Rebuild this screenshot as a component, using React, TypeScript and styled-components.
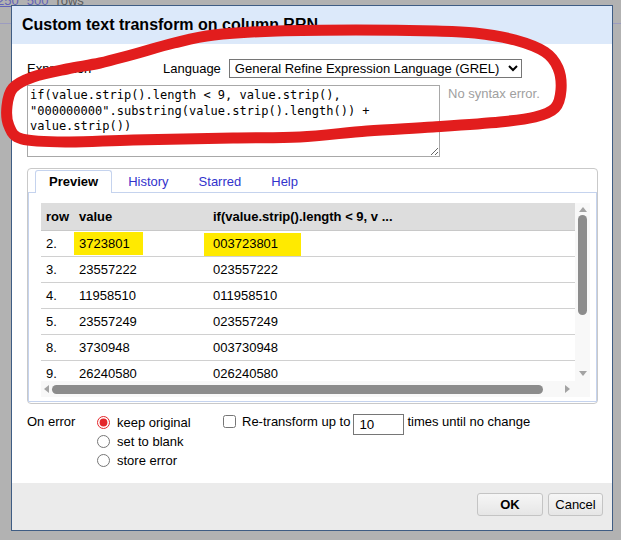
import React from 'react';
import styled, { createGlobalStyle } from 'styled-components';

const GlobalStyle = createGlobalStyle`
  html, body { margin: 0; padding: 0; background: #b2b2b2; }
  body { font-family: "Liberation Sans", Arial, sans-serif; font-size: 13px; color: #000; }
  * { box-sizing: border-box; }
`;

const Page = styled.div`
  position: relative;
  width: 621px;
  height: 540px;
  overflow: hidden;
  background: #b2b2b2;
`;

const BackgroundPage = styled.div`
  display: flex;
  flex-direction: column;
`;

const PagerRow = styled.div`
  display: flex;
  gap: 8px;
  margin: -7px 0 0 -3px;
  height: 16px;
  line-height: 15px;
`;

const PagerLink = styled.span`
  color: #6262b8;
  text-decoration: underline;
`;

const PagerText = styled.span`
  color: #5c5c5c;
`;

const PageRule = styled.div`
  margin-top: 14px;
  height: 1px;
  background: #9c9cc0;
`;

const Dialog = styled.div`
  position: absolute;
  left: 11px;
  top: 5px;
  width: 602px;
  height: 526px;
  border: 1px solid #3f5d84;
  background: #fff;
  display: flex;
  flex-direction: column;
`;

const TitleBar = styled.div`
  height: 38px;
  background: #dce9fa;
  padding: 0 10px;
  display: flex;
  align-items: center;
  font-weight: bold;
  font-size: 16px;
`;

const Body = styled.div`
  flex: 1;
  padding: 15px 14px 0 15px;
  display: flex;
  flex-direction: column;
`;

const ExprHeader = styled.div`
  display: flex;
  align-items: center;
  height: 19px;
`;

const ExprLabel = styled.span`
  width: 136px;
`;

const LangLabel = styled.span`
  margin-right: 8px;
`;

const LangSelect = styled.select`
  width: 293px;
  height: 19px;
  font-family: "Liberation Sans", Arial, sans-serif;
  font-size: 13px;
  padding: 0 1px;
  border: 1px solid #767676;
  border-radius: 0;
  background: #fff;
  color: #000;
`;

const EditorRow = styled.div`
  display: flex;
  align-items: flex-start;
  margin-top: 7px;
`;

const ExprArea = styled.textarea`
  width: 413px;
  height: 72px;
  font-family: "DejaVu Sans Mono", "Liberation Mono", monospace;
  font-size: 12px;
  line-height: 15.5px;
  padding: 2px;
  border: 1px solid #a8a8a8;
  color: #000;
  margin: 0;
`;

const SyntaxStatus = styled.span`
  margin-left: 8px;
  padding-top: 1px;
  color: #a0a0a0;
  line-height: 15px;
`;

const TabsBox = styled.div`
  margin-top: 11px;
  height: 236px;
  border: 1px solid #c9c9c9;
  border-radius: 4px;
  padding: 1px 0 1px 0;
  display: flex;
  flex-direction: column;
`;

const TabList = styled.div`
  display: flex;
  padding-left: 7px;
  height: 23px;
  margin-bottom: -1px;
`;

const Tab = styled.div<{ $active?: boolean }>`
  position: relative;
  z-index: 1;
  height: 23px;
  line-height: 21px;
  padding: 0 13px;
  margin-right: 2px;
  border: 1px solid ${p => (p.$active ? '#c5d3ee' : 'transparent')};
  border-bottom: none;
  border-radius: 3px 3px 0 0;
  background: ${p => (p.$active ? '#fff' : 'transparent')};
  color: ${p => (p.$active ? '#000' : '#3333cc')};
  font-weight: ${p => (p.$active ? 'bold' : 'normal')};
`;

const TabPanel = styled.div`
  flex: 1;
  border: 1px solid #c5d3ee;
  padding: 10px 5px 4px 12px;
`;

const ScrollGrid = styled.div`
  display: grid;
  grid-template-columns: 534px 15px;
  grid-template-rows: 178px 16px;
`;

const Viewport = styled.div`
  overflow: hidden;
`;

const Table = styled.table`
  width: 551px;
  border-collapse: collapse;
  table-layout: fixed;
`;

const HeadCell = styled.th<{ $w?: number }>`
  width: ${p => (p.$w ? `${p.$w}px` : 'auto')};
  height: 27px;
  padding: 0 5px;
  background: #dddddd;
  border-bottom: 1px solid #c8c8c8;
  text-align: left;
  font-weight: bold;
  white-space: nowrap;
`;

const Cell = styled.td`
  height: 26px;
  padding: 0 5px;
  border-bottom: 1px solid #d0d0d0;
  white-space: nowrap;
`;

const Mark = styled.span<{ $l: number; $t: number; $w: number; $h: number }>`
  position: relative;
  z-index: 0;
  &::before {
    content: '';
    position: absolute;
    z-index: -1;
    left: ${p => p.$l}px;
    top: ${p => p.$t}px;
    width: ${p => p.$w}px;
    height: ${p => p.$h}px;
    background: #ffea00;
  }
`;

const VScroll = styled.div`
  background: #f8f8f8;
  display: flex;
  flex-direction: column;
  align-items: center;
`;

const HScroll = styled.div`
  background: #f8f8f8;
  display: flex;
  align-items: center;
`;

const Corner = styled.div`
  background: #f8f8f8;
`;

const ArrowBox = styled.div<{ $w: number; $h: number }>`
  width: ${p => p.$w}px;
  height: ${p => p.$h}px;
  display: flex;
  align-items: center;
  justify-content: center;
  flex: none;
`;

const VThumb = styled.div`
  width: 9px;
  height: 100px;
  border-radius: 5px;
  background: #8c8c8c;
`;

const HThumb = styled.div`
  width: 491px;
  height: 9px;
  border-radius: 5px;
  background: #8c8c8c;
  flex: none;
`;

const Spacer = styled.div`
  flex: 1;
`;

const Options = styled.div`
  display: flex;
  align-items: flex-start;
  margin-top: 8px;
`;

const OnErrorLabel = styled.span`
  width: 70px;
  line-height: 20px;
`;

const RadioGroup = styled.div`
  width: 126px;
  display: flex;
  flex-direction: column;
`;

const RadioRow = styled.label<{ $h: number }>`
  display: flex;
  align-items: center;
  height: ${p => p.$h}px;
  gap: 7px;
`;

const Radio = styled.input`
  margin: 0;
  width: 13px;
  height: 13px;
  accent-color: #e4262a;
`;

const RetransformRow = styled.div`
  display: flex;
  align-items: flex-start;
`;

const Check = styled.input`
  margin: 3px 6px 0 0;
  width: 13px;
  height: 13px;
`;

const InlineText = styled.span`
  line-height: 20px;
`;

const TimesInput = styled.input`
  width: 51px;
  height: 21px;
  margin: 2px 3px 0 3px;
  padding: 1px 5px;
  border: 1px solid #767676;
  border-radius: 0;
  font-family: "Liberation Sans", Arial, sans-serif;
  font-size: 13.333px;
`;

const Footer = styled.div`
  height: 47px;
  background: #ebebeb;
  display: flex;
  justify-content: flex-end;
  align-items: flex-start;
  gap: 5px;
  padding: 10px 9px 0 0;
`;

const Button = styled.button<{ $w: number; $primary?: boolean }>`
  width: ${p => p.$w}px;
  height: 23px;
  border: 1px solid #c4c4c4;
  border-radius: 3px;
  background: linear-gradient(#f6f6f6, #e6e6e6);
  font-family: "Liberation Sans", Arial, sans-serif;
  font-size: 13px;
  font-weight: ${p => (p.$primary ? 'bold' : 'normal')};
  color: #000;
  padding: 0;
`;

const Annotation = styled.svg`
  position: absolute;
  left: 0;
  top: 0;
  pointer-events: none;
  z-index: 10;
`;

type Pt = [number, number];

function smoothPath(pts: Pt[]): string {
  const n = pts.length;
  let d = `M ${pts[0][0]} ${pts[0][1]}`;
  for (let i = 0; i < n; i++) {
    const p0 = pts[(i - 1 + n) % n];
    const p1 = pts[i];
    const p2 = pts[(i + 1) % n];
    const p3 = pts[(i + 2) % n];
    const c1x = p1[0] + (p2[0] - p0[0]) / 6;
    const c1y = p1[1] + (p2[1] - p0[1]) / 6;
    const c2x = p2[0] - (p3[0] - p1[0]) / 6;
    const c2y = p2[1] - (p3[1] - p1[1]) / 6;
    d += ` C ${c1x.toFixed(1)} ${c1y.toFixed(1)} ${c2x.toFixed(1)} ${c2y.toFixed(1)} ${p2[0]} ${p2[1]}`;
  }
  return d + ' Z';
}

const loop: Pt[] = [
  [131, 55], [174, 43], [214, 35], [277, 31], [356, 30], [436, 31], [475, 33],
  [515, 40], [545, 52], [558, 68], [561, 90], [555, 108], [535, 117], [500, 122],
  [433, 127], [367, 131], [300, 137], [233, 138], [133, 140], [67, 142], [22, 139],
  [9, 126], [7, 106], [13, 88], [33, 77], [67, 69], [100, 63],
];

const rows: [string, string, string][] = [
  ['2.', '3723801', '003723801'],
  ['3.', '23557222', '023557222'],
  ['4.', '11958510', '011958510'],
  ['5.', '23557249', '023557249'],
  ['8.', '3730948', '003730948'],
  ['9.', '26240580', '026240580'],
];

const Tri = ({ dir }: { dir: 'up' | 'down' | 'left' | 'right' }) => {
  const pts =
    dir === 'up' ? '0,5 4,0 8,5' :
    dir === 'down' ? '0,0 8,0 4,5' :
    dir === 'left' ? '5,0 5,8 0,4' : '0,0 0,8 5,4';
  const w = dir === 'up' || dir === 'down' ? 8 : 5;
  const h = dir === 'up' || dir === 'down' ? 5 : 8;
  return (
    <svg width={w} height={h} viewBox={`0 0 ${w} ${h}`}>
      <polygon points={pts} fill="#a3a3a3" />
    </svg>
  );
};

const expr =
  'if(value.strip().length < 9, value.strip(), "000000000".substring(value.strip().length()) + value.strip())';

export default function App() {
  return (
    <Page>
      <GlobalStyle />
      <BackgroundPage>
        <PagerRow>
          <PagerLink>250</PagerLink>
          <PagerLink>500</PagerLink>
          <PagerText>rows</PagerText>
        </PagerRow>
        <PageRule />
      </BackgroundPage>

      <Dialog>
        <TitleBar>Custom text transform on column RRN</TitleBar>
        <Body>
          <ExprHeader>
            <ExprLabel>Expression</ExprLabel>
            <LangLabel>Language</LangLabel>
            <LangSelect defaultValue="grel">
              <option value="grel">General Refine Expression Language (GREL)</option>
            </LangSelect>
          </ExprHeader>
          <EditorRow>
            <ExprArea defaultValue={expr} spellCheck={false} />
            <SyntaxStatus>No syntax error.</SyntaxStatus>
          </EditorRow>

          <TabsBox>
            <TabList>
              <Tab $active>Preview</Tab>
              <Tab>History</Tab>
              <Tab>Starred</Tab>
              <Tab>Help</Tab>
            </TabList>
            <TabPanel>
              <ScrollGrid>
                <Viewport>
                  <Table>
                    <thead>
                      <tr>
                        <HeadCell $w={33}>row</HeadCell>
                        <HeadCell $w={134}>value</HeadCell>
                        <HeadCell>if(value.strip().length &lt; 9, v ...</HeadCell>
                      </tr>
                    </thead>
                    <tbody>
                      {rows.map(([n, v, r], i) => (
                        <tr key={n}>
                          <Cell>{n}</Cell>
                          <Cell>
                            {i === 0 ? <Mark $l={-5} $t={-4} $w={69} $h={23}>{v}</Mark> : v}
                          </Cell>
                          <Cell>
                            {i === 0 ? <Mark $l={-9} $t={-3} $w={97} $h={23}>{r}</Mark> : r}
                          </Cell>
                        </tr>
                      ))}
                    </tbody>
                  </Table>
                </Viewport>
                <VScroll>
                  <ArrowBox $w={15} $h={12}><Tri dir="up" /></ArrowBox>
                  <VThumb />
                  <Spacer />
                  <ArrowBox $w={15} $h={16}><Tri dir="down" /></ArrowBox>
                </VScroll>
                <HScroll>
                  <ArrowBox $w={11} $h={16}><Tri dir="left" /></ArrowBox>
                  <HThumb />
                  <Spacer />
                  <ArrowBox $w={16} $h={16}><Tri dir="right" /></ArrowBox>
                </HScroll>
                <Corner />
              </ScrollGrid>
            </TabPanel>
          </TabsBox>

          <Options>
            <OnErrorLabel>On error</OnErrorLabel>
            <RadioGroup>
              <RadioRow $h={20}>
                <Radio type="radio" name="onerror" defaultChecked />
                keep original
              </RadioRow>
              <RadioRow $h={19}>
                <Radio type="radio" name="onerror" />
                set to blank
              </RadioRow>
              <RadioRow $h={19}>
                <Radio type="radio" name="onerror" />
                store error
              </RadioRow>
            </RadioGroup>
            <RetransformRow>
              <Check type="checkbox" />
              <InlineText>Re-transform up to</InlineText>
              <TimesInput defaultValue="10" />
              <InlineText>times until no change</InlineText>
            </RetransformRow>
          </Options>
        </Body>
        <Footer>
          <Button $w={66} $primary>OK</Button>
          <Button $w={55}>Cancel</Button>
        </Footer>
      </Dialog>

      <Annotation width={621} height={540} viewBox="0 0 621 540">
        <path
          d={smoothPath(loop)}
          fill="none"
          stroke="#e21d1d"
          strokeWidth={11}
          strokeLinecap="round"
          strokeLinejoin="round"
        />
      </Annotation>
    </Page>
  );
}
